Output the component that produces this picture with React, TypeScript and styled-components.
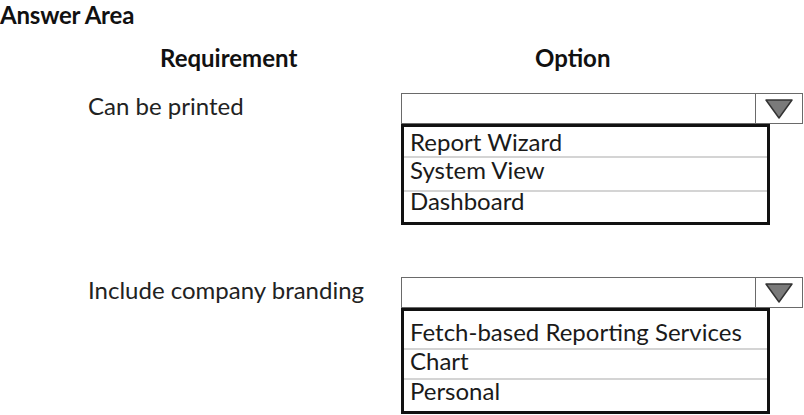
import styled, { createGlobalStyle } from "styled-components";

const GlobalStyle = createGlobalStyle`
    body {
        margin: 0;
        background: #ffffff;
        font-family: Lato, "Liberation Sans", sans-serif;
        color: #222222;
    }
`;

const Page = styled.div`
    width: 804px;
    height: 415px;
    overflow: hidden;
`;

const Title = styled.h1`
    margin: 0;
    font-size: 24px;
    font-weight: 700;
    line-height: 29px;
    color: #111111;
    letter-spacing: -0.2px;
`;

const Header = styled.div`
    display: grid;
    grid-template-columns: 401px 1fr;
    margin-top: 15px;
    font-size: 24px;
    font-weight: 700;
    color: #111111;
    line-height: 28px;
`;

const HeadCell = styled.div<{ $indent: number }>`
    padding-left: ${(p) => p.$indent}px;
`;

const Question = styled.div<{ $gap: number }>`
    display: grid;
    grid-template-columns: 88px 313px 402px;
    align-items: start;
    margin-top: ${(p) => p.$gap}px;
`;

const Label = styled.div`
    grid-column: 2;
    margin-top: -2px;
    font-size: 24px;
    line-height: 30px;
    height: 30px;
    white-space: nowrap;
`;

const Dropdown = styled.div`
    grid-column: 3;
    display: flex;
    flex-direction: column;
`;

const SelectBox = styled.div`
    display: flex;
    height: 29px;
    border: 1px solid #6a6a6a;
    background: #ffffff;
`;

const SelectValue = styled.div`
    flex: 1;
`;

const ArrowCell = styled.div`
    width: 46px;
    border-left: 1px solid #6a6a6a;
    display: flex;
    align-items: center;
    justify-content: center;
`;

const List = styled.div`
    width: 363px;
    border: 3px solid #111111;
`;

const Item = styled.div<{ $h: number; $pad: number }>`
    box-sizing: border-box;
    height: ${(p) => p.$h}px;
    padding: ${(p) => p.$pad}px 0 0 6px;
    font-size: 24px;
    line-height: 18px;
    color: #1a1a1a;
    white-space: nowrap;

    &:not(:last-child) {
        height: ${(p) => p.$h + 2}px;
        border-bottom: 2px solid #d4d4d4;
    }
`;

const Arrow = () => (
    <svg width="30" height="22" viewBox="0 0 30 22">
        <polygon
            points="2,2 28,2 15,20"
            fill="#7a7a7a"
            stroke="#333333"
            strokeWidth="1.5"
            strokeLinejoin="round"
        />
    </svg>
);

type Option = { text: string; h: number; pad: number };

type QuestionData = {
    label: string;
    options: Option[];
    gap: number;
};

const questions: QuestionData[] = [
    {
        label: "Can be printed",
        options: [
            { text: "Report Wizard", h: 29, pad: 6 },
            { text: "System View", h: 32, pad: 3 },
            { text: "Dashboard", h: 30, pad: 0 }
        ],
        gap: 21
    },
    {
        label: "Include company branding",
        options: [
            { text: "Fetch-based Reporting Services", h: 37, pad: 12 },
            { text: "Chart", h: 28, pad: 2 },
            { text: "Personal", h: 31, pad: 2 }
        ],
        gap: 52
    }
];

export default function App() {
    return (
        <Page>
            <GlobalStyle />
            <Title>Answer Area</Title>
            <Header>
                <HeadCell $indent={160}>Requirement</HeadCell>
                <HeadCell $indent={134}>Option</HeadCell>
            </Header>
            {questions.map((q) => (
                <Question key={q.label} $gap={q.gap}>
                    <Label>{q.label}</Label>
                    <Dropdown>
                        <SelectBox>
                            <SelectValue />
                            <ArrowCell>
                                <Arrow />
                            </ArrowCell>
                        </SelectBox>
                        <List>
                            {q.options.map((o) => (
                                <Item key={o.text} $h={o.h} $pad={o.pad}>
                                    {o.text}
                                </Item>
                            ))}
                        </List>
                    </Dropdown>
                </Question>
            ))}
        </Page>
    );
}
